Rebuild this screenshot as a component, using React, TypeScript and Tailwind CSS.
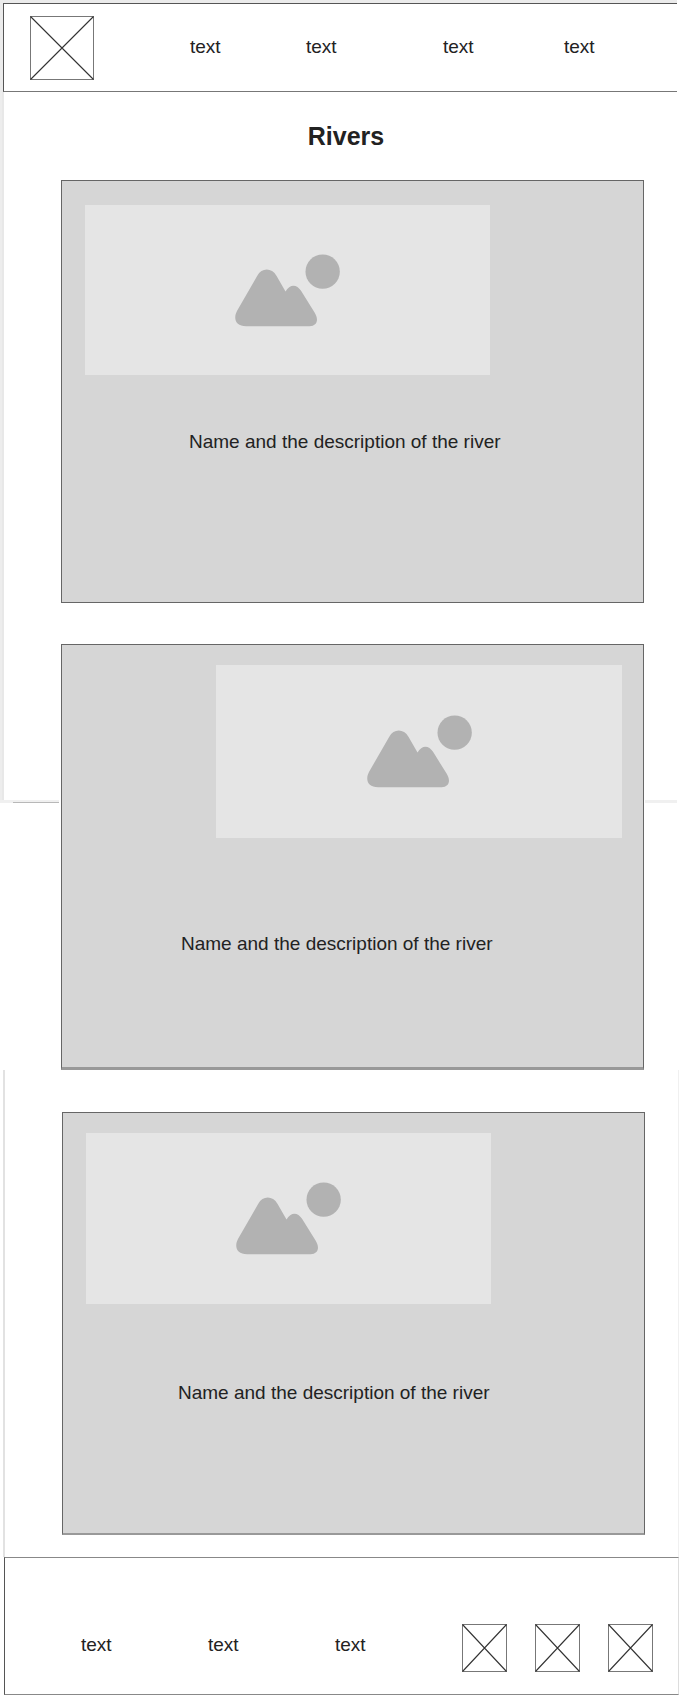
import React from "react";

function CrossBox({ className, width, height }: { className: string; width: number; height: number }) {
  return (
    <svg className={className} viewBox={`0 0 ${width} ${height}`} fill="none" aria-hidden="true">
      <rect x="0.5" y="0.5" width={width - 1} height={height - 1} stroke="#777777" />
      <path
        d={`M0.5 0.5 L${width - 0.5} ${height - 0.5} M${width - 0.5} 0.5 L0.5 ${height - 0.5}`}
        stroke="#333333"
        strokeWidth="1.1"
      />
    </svg>
  );
}

function PicturePlaceholder({ className }: { className: string }) {
  return (
    <div className={`flex items-center justify-center bg-[#e5e5e5] ${className}`}>
      <svg className="h-[73px] w-[105px]" viewBox="104 70 318 220" fill="#b2b2b2" aria-hidden="true">
        <circle cx="369.5" cy="123" r="52" />
        <path d="M171 136 C185 110 215 110 230 136 L257 183 C270 160 291 160 304 181 L345 247 C359 270 352 288 330 288 L138 288 C106 288 98 265 110 242 Z" />
      </svg>
    </div>
  );
}

const linkClass = "hover:underline";

export default function App() {
  return (
    <div className="bg-white font-['Liberation_Sans',Arial,sans-serif] text-[19px] leading-6 text-[#222222]">
      <div className="mr-[7px] bg-[#ebebeb] pt-[3px] pl-[3px]">
        <header className="flex h-[89px] items-center border-y border-l border-t-[#555555] border-b-[#777777] border-l-[#555555] bg-white pl-[26px]">
          <a href="#home" aria-label="Home" className="shrink-0">
            <CrossBox className="h-16 w-16" width={64} height={64} />
          </a>
          <nav className="ml-24 grid flex-1 grid-cols-[116fr_137fr_121fr_113fr] pb-px">
            {[1, 2, 3, 4].map((n) => (
              <div key={n}>
                <a href={`#page-${n}`} className={linkClass}>text</a>
              </div>
            ))}
          </nav>
        </header>
      </div>

      <main>
        <section className="flex">
          <div className="w-1 shrink-0 border-r-2 border-[#e8e8e8] bg-[#ededed]" />
          <div className="flex-1 pt-7 pb-[41px]">
            <h1 className="pl-1 text-center text-[25px] leading-8 font-bold">Rivers</h1>
            <article className="mt-7 mr-10 ml-[57px] border border-[#666666] bg-[#d6d6d6] pt-6 pb-[148px]">
              <PicturePlaceholder className="mr-[153px] ml-[23px] h-[170px]" />
              <p className="mt-[55px] pl-[127px]">Name and the description of the river</p>
            </article>
          </div>
        </section>

        <section className="flex items-start">
          <div className="flex h-[159px] w-[59px] shrink-0 flex-col">
            <div className="w-1 flex-1 border-r-2 border-[#e8e8e8] bg-[#ededed]" />
            <div className="h-[3px] bg-[#f0f0f0] pl-[13px]">
              <div className="h-[3px] border-b border-[#b8b8b8]" />
            </div>
          </div>
          <article className="ml-0.5 flex-1 border border-b-[3px] border-[#666666] border-b-[#999999] bg-[#d6d6d6] pt-5 pb-[111px]">
            <PicturePlaceholder className="mr-[21px] ml-[154px] h-[173px]" />
            <p className="mt-[94px] pl-[119px]">Name and the description of the river</p>
          </article>
          <div className="mr-[7px] ml-px h-[159px] w-8 shrink-0 border-b-[3px] border-[#f0f0f0]" />
        </section>

        <section className="mr-[5px] ml-[3px] border-r border-l-2 border-r-[#f0f0f0] border-l-[#e2e2e2] pt-[42px] pr-[33px] pb-[22px] pl-[57px]">
          <article className="border border-b-2 border-[#666666] border-b-[#999999] bg-[#d6d6d6] pt-5 pb-32">
            <PicturePlaceholder className="mr-[153px] ml-[23px] h-[171px]" />
            <p className="mt-[77px] pl-[115px]">Name and the description of the river</p>
          </article>
        </section>
      </main>

      <footer className="mr-[5px] ml-1 flex items-center border border-t-[#888888] border-r-[#dddddd] border-b-[#888888] border-l-[#555555] pt-[66px] pr-[25px] pb-[22px] pl-[76px]">
        <nav className="grid flex-1 grid-cols-3 pb-1.5">
          {[1, 2, 3].map((n) => (
            <div key={n}>
              <a href={`#info-${n}`} className={linkClass}>text</a>
            </div>
          ))}
        </nav>
        <div className="flex shrink-0 gap-7">
          {[1, 2, 3].map((n) => (
            <a key={n} href={`#social-${n}`} aria-label={`Social link ${n}`}>
              <CrossBox className="h-12 w-[45px]" width={45} height={48} />
            </a>
          ))}
        </div>
      </footer>
    </div>
  );
}
